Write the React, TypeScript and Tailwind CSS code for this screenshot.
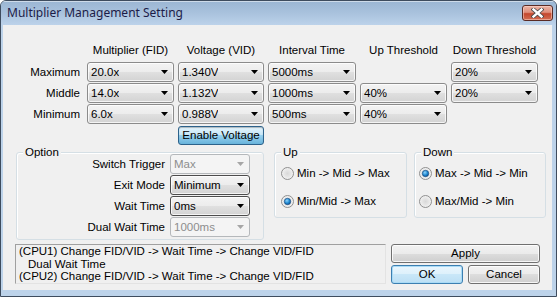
import { clsx } from "clsx";

/* ── Combo (drop-down list) ── */
function Arrow({ disabled }: { disabled?: boolean }) {
  return (
    <svg width="7" height="4" viewBox="0 0 7 4" className="flex-shrink-0">
      <polygon points="0,0 7,0 3.5,4" fill={disabled ? "#a6a6a6" : "#000"} />
    </svg>
  );
}

function Combo({ value, disabled, dark }: { value: string; disabled?: boolean; dark?: boolean }) {
  return (
    <div
      className={clsx(
        "flex h-[20px] items-center justify-between rounded-[3px] border pl-[3px] pr-[5px]",
        disabled
          ? "border-[#b5b8bb] bg-[#f4f4f4] text-[#8d8d8d]"
          : "bg-[linear-gradient(180deg,#f3f3f3_0%,#ececec_50%,#e0e0e0_50%,#d3d3d3_100%)] shadow-[inset_0_0_0_1px_rgba(255,255,255,0.75)]",
        !disabled && (dark ? "border-[#4c4c4c]" : "border-[#8b8b8b]")
      )}
    >
      <span className="truncate">{value}</span>
      <Arrow disabled={disabled} />
    </div>
  );
}

/* ── Buttons ── */
function Button({ label, kind = "normal", className }: { label: string; kind?: "normal" | "focus" | "pressed"; className?: string }) {
  return (
    <div
      className={clsx(
        "flex items-center justify-center rounded-[3px] border",
        kind === "normal" &&
          "border-[#707070] bg-[linear-gradient(180deg,#f2f2f2_0%,#ebebeb_50%,#dddddd_50%,#cfcfcf_100%)] shadow-[inset_0_0_0_1px_rgba(255,255,255,0.8)]",
        kind === "focus" &&
          "border-[#3c7fb1] bg-[linear-gradient(180deg,#eaf6fd_0%,#dcf0fb_50%,#c9e7f8_50%,#bcdff4_100%)] shadow-[inset_0_0_0_1px_#a9dbf6]",
        kind === "pressed" &&
          "border-[#2c628b] bg-[linear-gradient(180deg,#e5f4fc_0%,#c4e5f6_50%,#98d1ef_50%,#68b3db_100%)] shadow-[inset_0_1px_1px_rgba(0,0,0,0.25)]",
        className
      )}
    >
      {label}
    </div>
  );
}

/* ── Radio ── */
function Radio({ checked }: { checked?: boolean }) {
  return (
    <svg width="13" height="13" viewBox="0 0 13 13" className="flex-shrink-0">
      <defs>
        <radialGradient id="rbg" cx="0.5" cy="0.5" r="0.6">
          <stop offset="0" stopColor="#d8d8d8" />
          <stop offset="1" stopColor="#f7f7f7" />
        </radialGradient>
        <radialGradient id="rdot" cx="0.4" cy="0.35" r="0.7">
          <stop offset="0" stopColor="#8fd4fb" />
          <stop offset="0.6" stopColor="#1c86cf" />
          <stop offset="1" stopColor="#0d4f8f" />
        </radialGradient>
      </defs>
      <circle cx="6.5" cy="6.5" r="6" fill="url(#rbg)" stroke="#8f8f8f" strokeWidth="1" />
      {checked && <circle cx="6.5" cy="6.5" r="3.2" fill="url(#rdot)" stroke="#1f4f82" strokeWidth="0.7" />}
    </svg>
  );
}

/* ── Group box ── */
function Group({ title, className, children }: { title: string; className?: string; children: React.ReactNode }) {
  return (
    <div className={clsx("relative rounded-[3px] border border-[#d5dfe5] shadow-[inset_1px_1px_0_#fff]", className)}>
      <span className="absolute left-[6px] top-[-7px] bg-[#f0f0f0] px-[2px] leading-[13px]">{title}</span>
      {children}
    </div>
  );
}

const ROWS = [
  { label: "Maximum", fid: "20.0x", vid: "1.340V", interval: "5000ms", up: "",    down: "20%" },
  { label: "Middle",  fid: "14.0x", vid: "1.132V", interval: "1000ms", up: "40%", down: "20%" },
  { label: "Minimum", fid: "6.0x",  vid: "0.988V", interval: "500ms",  up: "40%", down: ""    },
];

const HEADERS = ["Multiplier (FID)", "Voltage (VID)", "Interval Time", "Up Threshold", "Down Threshold"];

const OPTIONS = [
  { label: "Switch Trigger", value: "Max",    disabled: true  },
  { label: "Exit Mode",      value: "Minimum", disabled: false },
  { label: "Wait Time",      value: "0ms",    disabled: false },
  { label: "Dual Wait Time", value: "1000ms", disabled: true  },
];

export default function App() {
  return (
    <div className="flex h-[297px] w-[557px] flex-col overflow-hidden rounded-t-[6px] border border-[#3e4c5e] bg-[#bdd3ea] font-['Liberation_Sans',Arial,sans-serif] text-[11.5px] leading-[13px] text-black">
      {/* ── Title bar ── */}
      <div className="flex h-[24px] flex-shrink-0 items-start justify-between bg-[linear-gradient(180deg,#9bb6d3_0%,#a9c2dd_50%,#bcd2ea_100%)] pl-[6px] pr-[3px] shadow-[inset_0_1px_0_rgba(255,255,255,0.5)]">
        <span className="mt-[4px] font-['Noto_Sans',sans-serif] text-[12px] leading-[16px] text-[#1c1c48]">
          Multiplier Management Setting
        </span>
        <div className="mt-[4px] flex h-[16px] w-[31px] items-center justify-center rounded-[3px] border border-[#5a2b24] bg-[linear-gradient(180deg,#ebb5a7_0%,#df8e7a_45%,#c4472d_55%,#d36d52_100%)] shadow-[inset_0_0_0_1px_rgba(255,220,210,0.5)]">
          <svg width="13" height="10" viewBox="0 0 13 10">
            <path d="M2.5 1.5 L10.5 8.5 M10.5 1.5 L2.5 8.5" stroke="#4a4a4a" strokeWidth="4" strokeLinecap="square" />
            <path d="M2.5 1.5 L10.5 8.5 M10.5 1.5 L2.5 8.5" stroke="#fff" strokeWidth="2.4" strokeLinecap="square" />
          </svg>
        </div>
      </div>

      {/* ── Client area ── */}
      <div className="mb-[6px] ml-[2px] mr-[4px] flex-1 bg-[#f0f0f0]">
        {/* Table */}
        <div className="mt-[19px] grid grid-cols-[80px_87px_86px_88px_87px_87px] gap-x-[4px] gap-y-[1px]">
          <div className="mb-[4px] h-[13px]" />
          {HEADERS.map((h) => (
            <div key={h} className="mb-[4px] h-[13px] text-center whitespace-nowrap">{h}</div>
          ))}

          {ROWS.map((r) => (
            <div key={r.label} className="contents">
              <div className="flex h-[20px] items-center justify-end pr-[3px]">{r.label}</div>
              <Combo value={r.fid} />
              <Combo value={r.vid} />
              <Combo value={r.interval} />
              {r.up ? <Combo value={r.up} /> : <div />}
              {r.down ? <Combo value={r.down} /> : <div />}
            </div>
          ))}

          <Button label="Enable Voltage" kind="pressed" className="col-start-3 mt-[1px] h-[19px]" />
        </div>

        {/* Option / Up / Down */}
        <div className="mt-[7px] flex items-start">
          <Group title="Option" className="ml-[13px] h-[88px] w-[248px]">
            <div className="grid grid-cols-[148px_80px] gap-x-[5px] gap-y-[1px] pt-[1px]">
              {OPTIONS.map((o) => (
                <div key={o.label} className="contents">
                  <div className="flex h-[20px] items-center justify-end whitespace-nowrap">{o.label}</div>
                  <Combo value={o.value} disabled={o.disabled} dark />
                </div>
              ))}
            </div>
          </Group>

          <Group title="Up" className="ml-[10px] h-[66px] w-[133px]">
            <div className="flex flex-col gap-[12px] pl-[6px] pt-[12px]">
              <label className="flex h-[16px] items-center gap-[3px]"><Radio />Min -&gt; Mid -&gt; Max</label>
              <label className="flex h-[16px] items-center gap-[3px]"><Radio checked />Min/Mid -&gt; Max</label>
            </div>
          </Group>

          <Group title="Down" className="ml-[7px] h-[66px] w-[132px]">
            <div className="flex flex-col gap-[12px] pl-[4px] pt-[12px]">
              <label className="flex h-[16px] items-center gap-[3px]"><Radio checked />Max -&gt; Mid -&gt; Min</label>
              <label className="flex h-[16px] items-center gap-[3px]"><Radio />Max/Mid -&gt; Min</label>
            </div>
          </Group>
        </div>

        {/* Description + buttons */}
        <div className="mt-[4px] flex items-start">
          <div className="ml-[12px] h-[40px] w-[371px] border border-t-[#a0a0a0] border-l-[#a0a0a0] border-r-[#e3e3e3] border-b-[#e3e3e3] pl-[3px] leading-[12.5px] whitespace-nowrap">
            <div>(CPU1) Change FID/VID -&gt; Wait Time -&gt; Change VID/FID</div>
            <div className="pl-[9px]">Dual Wait Time</div>
            <div>(CPU2) Change FID/VID -&gt; Wait Time -&gt; Change VID/FID</div>
          </div>

          <div className="ml-[5px] flex w-[149px] flex-col gap-[2px]">
            <Button label="Apply" className="h-[19px]" />
            <div className="flex gap-[5px]">
              <Button label="OK" kind="focus" className="h-[19px] w-[72px]" />
              <Button label="Cancel" className="h-[19px] w-[72px]" />
            </div>
          </div>
        </div>
      </div>
    </div>
  );
}
